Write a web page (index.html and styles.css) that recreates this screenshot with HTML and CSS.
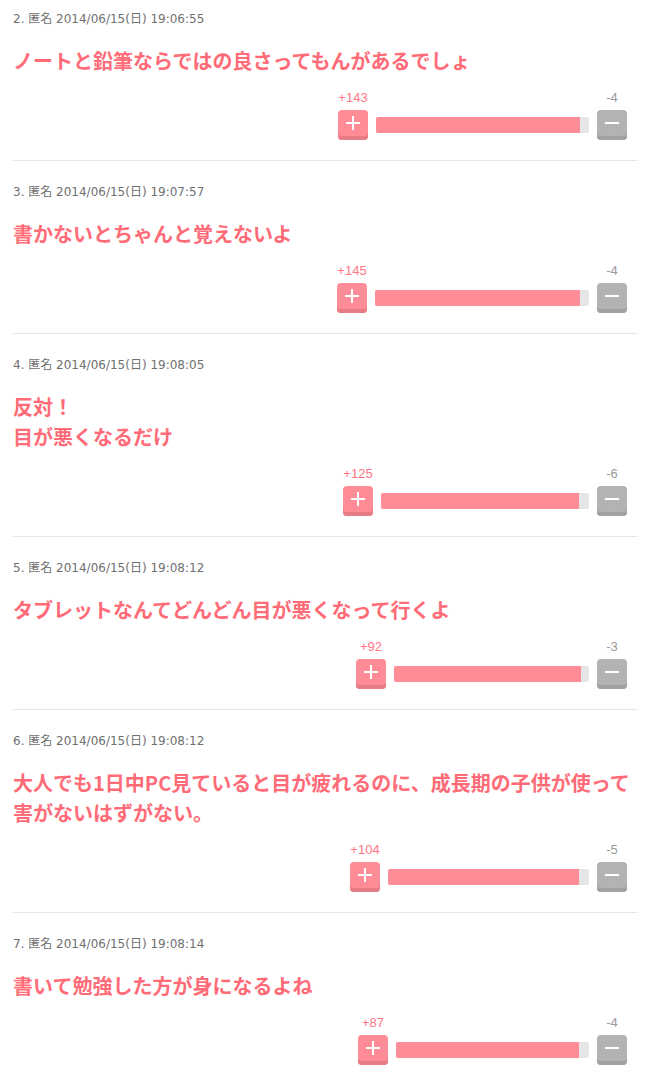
FILE: index.html
```html
<!DOCTYPE html>
<html lang="ja">
<head>
    <meta charset="UTF-8">
    <meta name="viewport" content="width=device-width, initial-scale=1.0">
    <title>コメント</title>
    <link rel="stylesheet" href="styles.css">
</head>
<body>
    <div class="comment-list">
        <div class="comment">
            <div class="comment-head">2. 匿名 2014/06/15(日) 19:06:55</div>
            <div class="comment-body">ノートと鉛筆ならではの良さってもんがあるでしょ</div>
            <div class="vote">
                <div class="vote-col"><span class="vote-count plus">+143</span><button class="btn btn-plus"><svg width="14" height="14" viewBox="0 0 14 14"><path d="M7 0v14M0 7h14" stroke="#fff" stroke-width="2"/></svg></button></div>
                <div class="vote-bar" style="width:213px"><div class="vote-fill" style="width:96%"></div></div>
                <div class="vote-col"><span class="vote-count minus">-4</span><button class="btn btn-minus"><svg width="14" height="14" viewBox="0 0 14 14"><path d="M0 7h14" stroke="#fff" stroke-width="2"/></svg></button></div>
            </div>
        </div>

        <div class="comment">
            <div class="comment-head">3. 匿名 2014/06/15(日) 19:07:57</div>
            <div class="comment-body">書かないとちゃんと覚えないよ</div>
            <div class="vote">
                <div class="vote-col"><span class="vote-count plus">+145</span><button class="btn btn-plus"><svg width="14" height="14" viewBox="0 0 14 14"><path d="M7 0v14M0 7h14" stroke="#fff" stroke-width="2"/></svg></button></div>
                <div class="vote-bar" style="width:214px"><div class="vote-fill" style="width:96%"></div></div>
                <div class="vote-col"><span class="vote-count minus">-4</span><button class="btn btn-minus"><svg width="14" height="14" viewBox="0 0 14 14"><path d="M0 7h14" stroke="#fff" stroke-width="2"/></svg></button></div>
            </div>
        </div>

        <div class="comment">
            <div class="comment-head">4. 匿名 2014/06/15(日) 19:08:05</div>
            <div class="comment-body">反対！<br>目が悪くなるだけ</div>
            <div class="vote">
                <div class="vote-col"><span class="vote-count plus">+125</span><button class="btn btn-plus"><svg width="14" height="14" viewBox="0 0 14 14"><path d="M7 0v14M0 7h14" stroke="#fff" stroke-width="2"/></svg></button></div>
                <div class="vote-bar" style="width:208px"><div class="vote-fill" style="width:95%"></div></div>
                <div class="vote-col"><span class="vote-count minus">-6</span><button class="btn btn-minus"><svg width="14" height="14" viewBox="0 0 14 14"><path d="M0 7h14" stroke="#fff" stroke-width="2"/></svg></button></div>
            </div>
        </div>

        <div class="comment">
            <div class="comment-head">5. 匿名 2014/06/15(日) 19:08:12</div>
            <div class="comment-body">タブレットなんてどんどん目が悪くなって行くよ</div>
            <div class="vote">
                <div class="vote-col"><span class="vote-count plus">+92</span><button class="btn btn-plus"><svg width="14" height="14" viewBox="0 0 14 14"><path d="M7 0v14M0 7h14" stroke="#fff" stroke-width="2"/></svg></button></div>
                <div class="vote-bar" style="width:195px"><div class="vote-fill" style="width:96%"></div></div>
                <div class="vote-col"><span class="vote-count minus">-3</span><button class="btn btn-minus"><svg width="14" height="14" viewBox="0 0 14 14"><path d="M0 7h14" stroke="#fff" stroke-width="2"/></svg></button></div>
            </div>
        </div>

        <div class="comment">
            <div class="comment-head">6. 匿名 2014/06/15(日) 19:08:12</div>
            <div class="comment-body">大人でも1日中PC見ていると目が疲れるのに、成長期の子供が使って害がないはずがない。</div>
            <div class="vote">
                <div class="vote-col"><span class="vote-count plus">+104</span><button class="btn btn-plus"><svg width="14" height="14" viewBox="0 0 14 14"><path d="M7 0v14M0 7h14" stroke="#fff" stroke-width="2"/></svg></button></div>
                <div class="vote-bar" style="width:201px"><div class="vote-fill" style="width:95%"></div></div>
                <div class="vote-col"><span class="vote-count minus">-5</span><button class="btn btn-minus"><svg width="14" height="14" viewBox="0 0 14 14"><path d="M0 7h14" stroke="#fff" stroke-width="2"/></svg></button></div>
            </div>
        </div>

        <div class="comment">
            <div class="comment-head">7. 匿名 2014/06/15(日) 19:08:14</div>
            <div class="comment-body">書いて勉強した方が身になるよね</div>
            <div class="vote">
                <div class="vote-col"><span class="vote-count plus">+87</span><button class="btn btn-plus"><svg width="14" height="14" viewBox="0 0 14 14"><path d="M7 0v14M0 7h14" stroke="#fff" stroke-width="2"/></svg></button></div>
                <div class="vote-bar" style="width:193px"><div class="vote-fill" style="width:95%"></div></div>
                <div class="vote-col"><span class="vote-count minus">-4</span><button class="btn btn-minus"><svg width="14" height="14" viewBox="0 0 14 14"><path d="M0 7h14" stroke="#fff" stroke-width="2"/></svg></button></div>
            </div>
        </div>
    </div>
</body>
</html>
```

FILE: styles.css
```css
/* 全体 */
body {
    margin: 0;
    padding: 0;
    background: #fff;
    font-family: "Liberation Sans", "Noto Sans CJK JP", sans-serif;
    overflow: hidden;
}

.comment-list {
    margin: 0 11px 0 13px;
}

/* コメント */
.comment {
    padding: 23px 0 20px;
    border-bottom: 1px solid #e5e5e5;
}

.comment:first-child {
    padding-top: 11px;
}

.comment-head {
    font-family: "DejaVu Sans", "Noto Sans CJK JP", sans-serif;
    font-size: 12px;
    line-height: 16px;
    color: #707070;
}

.comment-body {
    margin-top: 19px;
    font-family: "Noto Sans CJK JP", sans-serif;
    font-size: 20px;
    font-weight: bold;
    line-height: 30px;
    color: #ff6b77;
}

/* 投票 */
.vote {
    display: flex;
    justify-content: flex-end;
    align-items: flex-end;
    gap: 8px;
    margin-top: 15px;
    padding-right: 10px;
}

.vote-col {
    display: flex;
    flex-direction: column;
    align-items: center;
    gap: 5px;
    width: 30px;
}

.vote-count {
    font-size: 13px;
    line-height: 14px;
    white-space: nowrap;
}

.vote-count.plus {
    color: #ff7683;
}

.vote-count.minus {
    color: #999;
}

.btn {
    display: flex;
    align-items: center;
    justify-content: center;
    width: 30px;
    height: 30px;
    padding: 0 0 4px;
    border: none;
    border-radius: 4px;
    box-sizing: border-box;
    cursor: pointer;
}

.btn-plus {
    background: #ff8c97;
    box-shadow: inset 0 -4px 0 #e77c87;
}

.btn-minus {
    background: #b3b3b3;
    box-shadow: inset 0 -4px 0 #a2a2a2;
}

.vote-bar {
    height: 16px;
    margin-bottom: 7px;
    background: #e6e6e6;
    border-radius: 2px;
    overflow: hidden;
}

.vote-fill {
    height: 100%;
    background: #ff8c97;
}
```
